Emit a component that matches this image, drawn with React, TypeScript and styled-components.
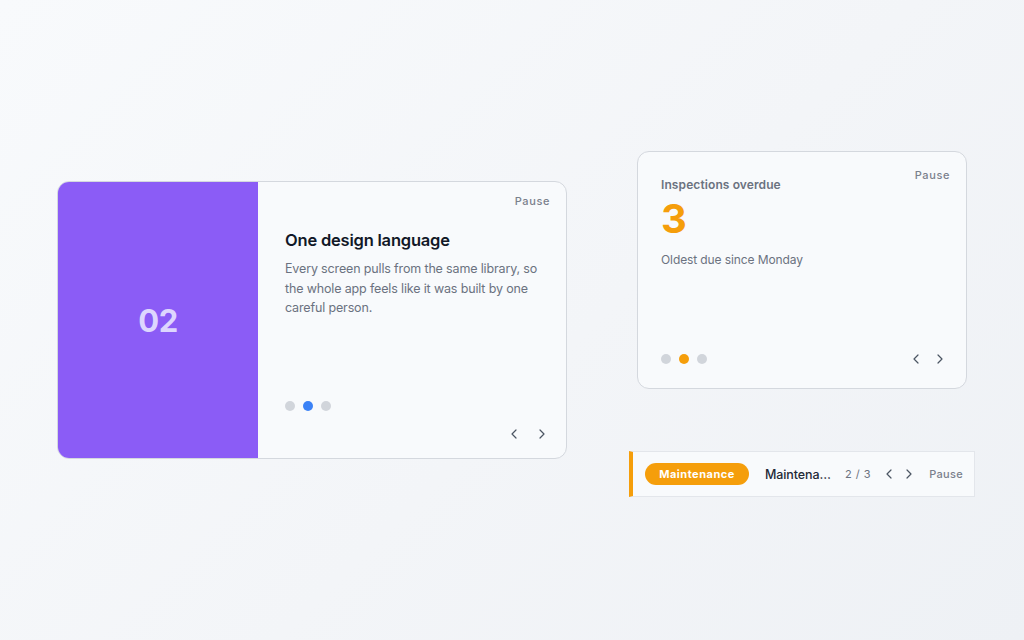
import React from "react";
import styled, { createGlobalStyle } from "styled-components";
import { ChevronLeft, ChevronRight } from "lucide-react";

const Global = createGlobalStyle`
  html, body { margin: 0; padding: 0; }
  body {
    font-family: Inter, "Noto Sans", "Liberation Sans", sans-serif;
    background: linear-gradient(135deg, #f8fafc 0%, #f3f5f8 55%, #eef1f5 100%);
    width: 1024px;
    height: 640px;
    overflow: hidden;
  }
`;

const Page = styled.div`
  display: flex;
  align-items: flex-start;
  padding: 151px 0 0 57px;
  gap: 62px;
  width: 1024px;
  height: 640px;
  box-sizing: border-box;
`;

const HeroCard = styled.section`
  margin-top: 30px;
  width: 510px;
  height: 278px;
  flex: none;
  box-sizing: border-box;
  display: flex;
  border: 1px solid #d4d8de;
  border-radius: 12px;
  overflow: hidden;
  background: #f8fafc;
  position: relative;
`;

const Swatch = styled.div`
  width: 200px;
  flex: none;
  background: #8b5cf6;
  display: flex;
  align-items: center;
  justify-content: center;
  color: #ddd6fe;
  font-size: 31px;
  font-weight: 700;
  letter-spacing: -0.5px;
`;

const HeroBody = styled.div`
  flex: 1;
  display: flex;
  flex-direction: column;
  padding: 48px 16px 16px 27px;
`;

const PauseButton = styled.button<{ $top: number }>`
  position: absolute;
  top: ${(p) => p.$top}px;
  right: 12px;
  border: 0;
  background: transparent;
  padding: 3px 4px;
  font-family: inherit;
  font-size: 11px;
  font-weight: 500;
  letter-spacing: 0.6px;
  color: #7a808c;
  cursor: pointer;
`;

const Title = styled.h2`
  margin: 0;
  font-size: 16.5px;
  font-weight: 600;
  color: #111827;
  letter-spacing: -0.2px;
`;

const Body = styled.p`
  margin: 9px 0 0;
  font-size: 12.5px;
  line-height: 19.5px;
  color: #6b7280;
  letter-spacing: -0.15px;
  max-width: 262px;
`;

const Dots = styled.div<{ $push?: boolean }>`
  display: flex;
  gap: 8px;
  margin-top: ${(p) => (p.$push ? "auto" : "0")};
`;

const Dot = styled.span<{ $active?: boolean; $color: string }>`
  width: 10px;
  height: 10px;
  border-radius: 50%;
  background: ${(p) => (p.$active ? p.$color : "#d1d5db")};
`;

const Arrows = styled.div<{ $gap?: number }>`
  display: flex;
  gap: ${(p) => p.$gap ?? 12}px;
  color: #4b5563;
`;

const ArrowBtn = styled.button`
  border: 0;
  background: transparent;
  padding: 0;
  display: flex;
  color: inherit;
  cursor: pointer;
`;

const HeroFooter = styled.div`
  display: flex;
  justify-content: flex-end;
  margin-top: 15px;
`;

const Column = styled.div`
  display: flex;
  flex: none;
  flex-direction: column;
  align-items: center;
  gap: 62px;
  width: 346px;
`;

const StatCard = styled.section`
  position: relative;
  width: 330px;
  height: 238px;
  box-sizing: border-box;
  border: 1px solid #d4d8de;
  border-radius: 12px;
  background: #f8fafc;
  padding: 25px 18px 21px 23px;
  display: flex;
  flex-direction: column;
`;

const StatLabel = styled.div`
  font-size: 12px;
  font-weight: 600;
  color: #6b7280;
  letter-spacing: 0.1px;
`;

const StatValue = styled.div`
  font-size: 40px;
  font-weight: 700;
  color: #f59e0b;
  line-height: 44px;
  margin-top: 5px;
`;

const StatNote = styled.div`
  font-size: 12px;
  color: #6b7280;
  margin-top: 11px;
  letter-spacing: -0.1px;
`;

const StatFooter = styled.div`
  margin-top: auto;
  display: flex;
  align-items: center;
  justify-content: space-between;
`;

const Banner = styled.div`
  width: 346px;
  height: 46px;
  box-sizing: border-box;
  display: flex;
  align-items: center;
  background: #f8fafc;
  border: 1px solid #e3e6eb;
  border-left: 4px solid #f59e0b;
  padding: 0 14px 0 12px;
`;

const Pill = styled.span`
  flex: none;
  width: 104px;
  height: 22px;
  border-radius: 11px;
  background: #f59e0b;
  color: #fff;
  font-size: 11px;
  font-weight: 700;
  letter-spacing: 0.5px;
  display: flex;
  align-items: center;
  justify-content: center;
`;

const BannerText = styled.span`
  flex: none;
  margin-left: 16px;
  width: 70px;
  font-size: 12.5px;
  font-weight: 500;
  color: #1f2937;
  letter-spacing: -0.1px;
  white-space: nowrap;
  overflow: hidden;
  text-overflow: ellipsis;
`;

const Counter = styled.span`
  flex: none;
  margin-left: 10px;
  font-size: 11px;
  color: #6b7280;
  letter-spacing: 0.5px;
  white-space: nowrap;
`;

const BannerArrows = styled.div`
  flex: none;
  margin-left: 10px;
  display: flex;
  gap: 4px;
  color: #4b5563;
`;

const BannerPause = styled.button`
  flex: none;
  margin-left: 12px;
  border: 0;
  background: transparent;
  padding: 0;
  font-family: inherit;
  font-size: 11px;
  font-weight: 500;
  letter-spacing: 0.3px;
  color: #7a808c;
`;

export default function App() {
  return (
    <>
      <Global />
      <Page>
        <HeroCard>
          <Swatch>02</Swatch>
          <HeroBody>
            <Title>One design language</Title>
            <Body>
              Every screen pulls from the same library, so the whole app feels
              like it was built by one careful person.
            </Body>
            <Dots $push>
              {[0, 1, 2].map((i) => (
                <Dot key={i} $active={i === 1} $color="#3b82f6" />
              ))}
            </Dots>
            <HeroFooter>
              <Arrows>
                <ArrowBtn aria-label="Previous">
                  <ChevronLeft size={16} strokeWidth={1.8} />
                </ArrowBtn>
                <ArrowBtn aria-label="Next">
                  <ChevronRight size={16} strokeWidth={1.8} />
                </ArrowBtn>
              </Arrows>
            </HeroFooter>
          </HeroBody>
          <PauseButton $top={9}>Pause</PauseButton>
        </HeroCard>
        <Column>
          <StatCard>
            <StatLabel>Inspections overdue</StatLabel>
            <StatValue>3</StatValue>
            <StatNote>Oldest due since Monday</StatNote>
            <StatFooter>
              <Dots>
                {[0, 1, 2].map((i) => (
                  <Dot key={i} $active={i === 1} $color="#f59e0b" />
                ))}
              </Dots>
              <Arrows $gap={8}>
                <ArrowBtn aria-label="Previous">
                  <ChevronLeft size={16} strokeWidth={1.8} />
                </ArrowBtn>
                <ArrowBtn aria-label="Next">
                  <ChevronRight size={16} strokeWidth={1.8} />
                </ArrowBtn>
              </Arrows>
            </StatFooter>
            <PauseButton $top={13}>Pause</PauseButton>
          </StatCard>
          <Banner>
            <Pill>Maintenance</Pill>
            <BannerText>Maintenance window tonight</BannerText>
            <Counter>2 / 3</Counter>
            <BannerArrows>
              <ArrowBtn aria-label="Previous">
                <ChevronLeft size={16} strokeWidth={1.8} />
              </ArrowBtn>
              <ArrowBtn aria-label="Next">
                <ChevronRight size={16} strokeWidth={1.8} />
              </ArrowBtn>
            </BannerArrows>
            <BannerPause>Pause</BannerPause>
          </Banner>
        </Column>
      </Page>
    </>
  );
}
